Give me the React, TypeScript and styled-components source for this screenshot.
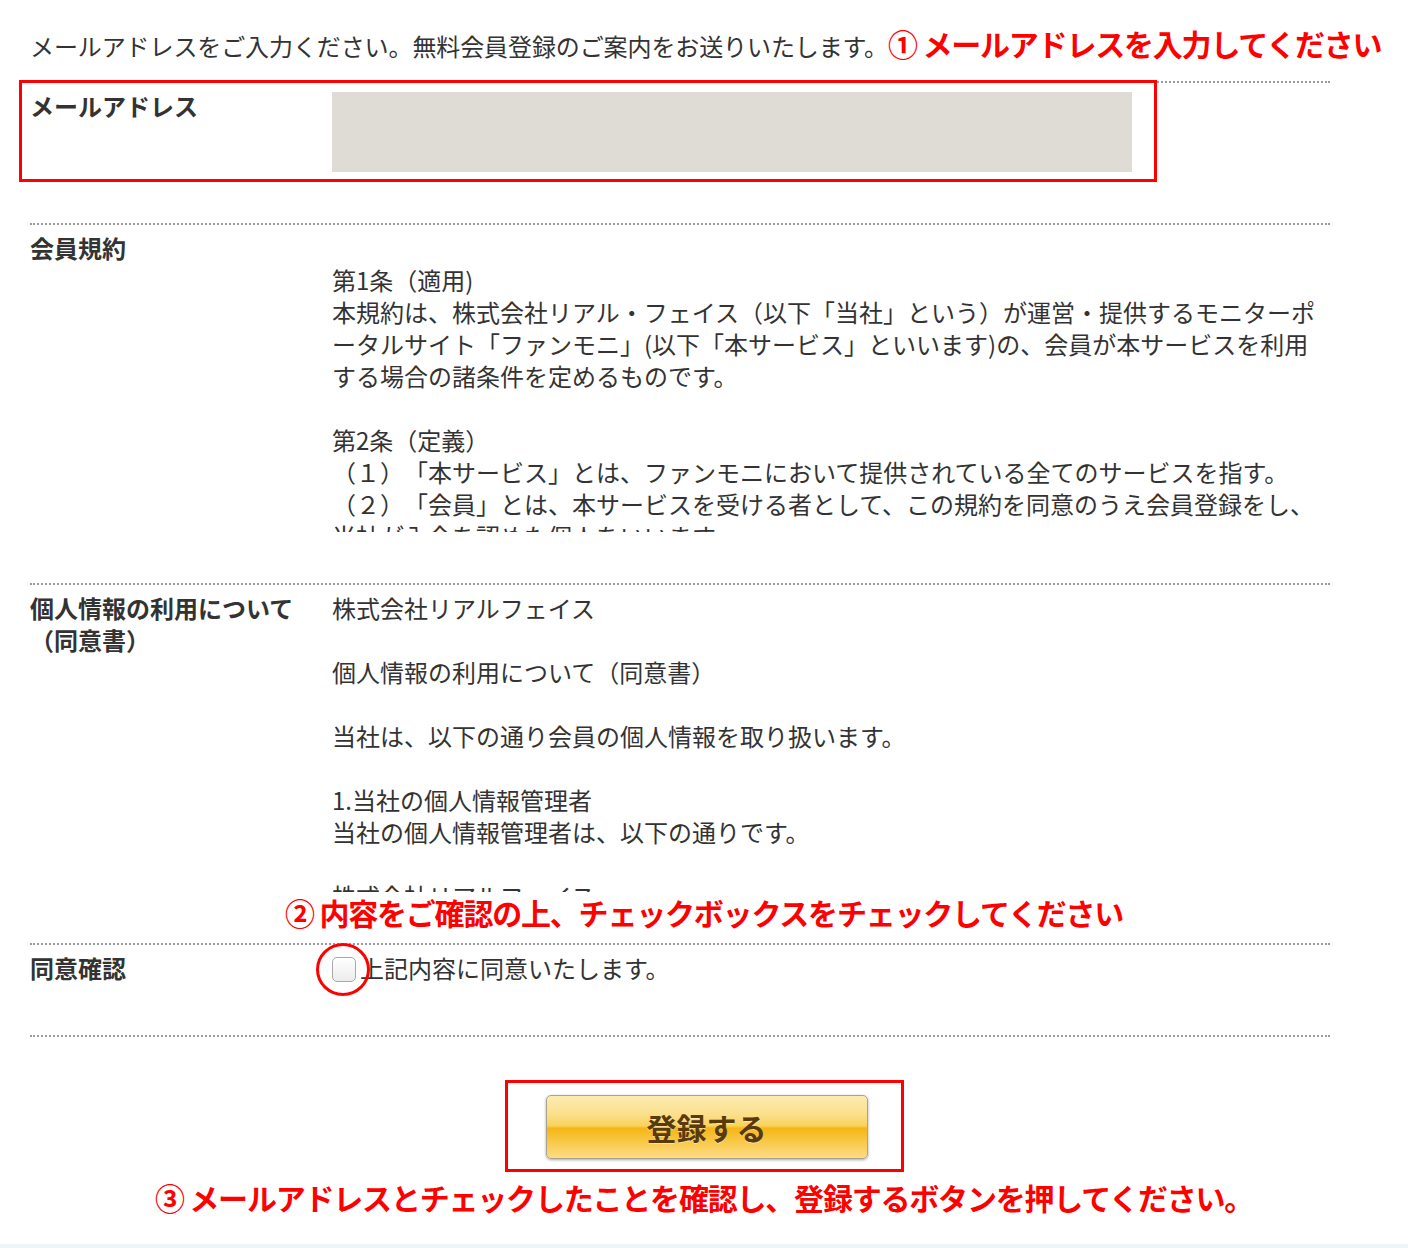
import React from 'react';
import styled, { createGlobalStyle } from 'styled-components';

const GlobalStyle = createGlobalStyle`
  html, body { margin: 0; padding: 0; background: #fff; }
  body {
    font-family: "Noto Sans CJK JP", "Noto Sans", sans-serif;
    color: #333;
    text-spacing-trim: space-all;
  }
`;

const Page = styled.div`
  width: 1408px;
  display: flex;
  flex-direction: column;
`;

const Form = styled.div`
  margin-left: 30px;
  width: 1300px;
`;

const Intro = styled.p`
  margin: 0 0 22px;
  padding-top: 27px;
  height: 32px;
  font-size: 24px;
  line-height: 32px;
  white-space: nowrap;
  letter-spacing: -0.1px;
`;

const Note = styled.span`
  color: #ff0000;
  font-weight: 700;
  font-size: 30px;
  line-height: 32px;
  letter-spacing: -1.2px;
  white-space: nowrap;
`;

const Row = styled.div<{ $last?: boolean }>`
  position: relative;
  display: grid;
  grid-template-columns: 302px 998px;
  align-items: start;
  border-top: 2px dotted #9a9a9a;
  padding: 7px 0 51px;
  ${(p) => (p.$last ? 'border-bottom: 2px dotted #9a9a9a;' : '')}
`;

const Label = styled.div`
  font-size: 24px;
  line-height: 32px;
  font-weight: 700;
  color: #333;
`;

const EmailInput = styled.input`
  display: block;
  width: 800px;
  height: 80px;
  margin: 2px 0 0;
  padding: 0;
  border: none;
  background: #dfdcd5;
  outline: none;
`;

const TermsBox = styled.div<{ $offset?: boolean }>`
  box-sizing: border-box;
  height: 300px;
  padding-top: ${(p) => (p.$offset ? '32px' : '0')};
  overflow: hidden;
  font-size: 24px;
  line-height: 32px;
  white-space: pre-line;
  color: #333;
`;

const RedFrame = styled.div`
  position: absolute;
  left: -11px;
  top: -3px;
  width: 1138px;
  height: 102px;
  box-sizing: border-box;
  border: 3px solid #ff0000;
  pointer-events: none;
`;

const FloatingNote = styled(Note)`
  position: absolute;
  left: 255px;
  bottom: 11px;
  line-height: 40px;
`;

const AgreeLine = styled.label`
  display: flex;
  align-items: center;
  gap: 4px;
  height: 32px;
  font-size: 24px;
  line-height: 32px;
  color: #333;
`;

const CheckWrap = styled.span`
  position: relative;
  display: inline-flex;
  margin-top: 2px;
`;

const Check = styled.input`
  appearance: none;
  -webkit-appearance: none;
  width: 24px;
  height: 25px;
  margin: 0;
  box-sizing: border-box;
  border: 1px solid #a8a8a8;
  border-radius: 5px;
  background: linear-gradient(#ffffff, #ececec);
  box-shadow: inset 0 1px 1px rgba(255, 255, 255, 0.9);
`;

const RedCircle = styled.span`
  position: absolute;
  left: -16px;
  top: -14px;
  width: 54px;
  height: 53px;
  box-sizing: border-box;
  border: 3px solid #ff0000;
  border-radius: 50%;
  pointer-events: none;
`;

const Submit = styled.div`
  display: flex;
  flex-direction: column;
  align-items: center;
  margin-top: 43px;
`;

const ButtonFrame = styled.div`
  border: 3px solid #ff0000;
  padding: 12px 33px 10px 38px;
`;

const Button = styled.button`
  display: block;
  width: 322px;
  height: 64px;
  border: 1px solid #a9a28f;
  border-radius: 5px;
  background: linear-gradient(
    to bottom,
    #fdebb3 0%,
    #fbdf8a 30%,
    #f9d25c 48%,
    #f5b616 52%,
    #f8c94a 75%,
    #fcdc86 100%
  );
  box-shadow: 0 1px 3px rgba(0, 0, 0, 0.35);
  font-family: "Noto Sans CJK JP", sans-serif;
  font-size: 30px;
  font-weight: 700;
  color: #5a3a0c;
  text-shadow: 0 1px 0 rgba(255, 255, 255, 0.45);
  cursor: pointer;
`;

const BottomNote = styled(Note)`
  display: block;
  margin-top: 5px;
  line-height: 40px;
  text-align: center;
`;

const Footer = styled.div`
  margin-top: 27px;
  height: 40px;
  background: #eef5f8;
`;

const terms1 = `第1条（適用)
本規約は、株式会社リアル・フェイス（以下「当社」という）が運営・提供するモニターポ
ータルサイト「ファンモニ」(以下「本サービス」といいます)の、会員が本サービスを利用
する場合の諸条件を定めるものです。

第2条（定義）
（１）「本サービス」とは、ファンモニにおいて提供されている全てのサービスを指す。
（２）「会員」とは、本サービスを受ける者として、この規約を同意のうえ会員登録をし、
当社が入会を認めた個人をいいます。
（３）「登録情報」とは、会員が本サービスを利用するにあたり当社に届け出た情報をいいます。`;

const terms2 = `株式会社リアルフェイス

個人情報の利用について（同意書）

当社は、以下の通り会員の個人情報を取り扱います。

1.当社の個人情報管理者
当社の個人情報管理者は、以下の通りです。

株式会社リアルフェイス
個人情報保護管理者`;

export default function App() {
  return (
    <Page>
      <GlobalStyle />
      <Form>
        <Intro>
          メールアドレスをご入力ください。無料会員登録のご案内をお送りいたします。
          <Note>① メールアドレスを入力してください</Note>
        </Intro>

        <Row>
          <Label>メールアドレス</Label>
          <div>
            <EmailInput type="email" aria-label="メールアドレス" />
          </div>
          <RedFrame />
        </Row>

        <Row>
          <Label>会員規約</Label>
          <TermsBox $offset>{terms1}</TermsBox>
        </Row>

        <Row>
          <Label>
            個人情報の利用について
            <br />
            （同意書）
          </Label>
          <TermsBox>{terms2}</TermsBox>
          <FloatingNote>② 内容をご確認の上、チェックボックスをチェックしてください</FloatingNote>
        </Row>

        <Row $last>
          <Label>同意確認</Label>
          <AgreeLine>
            <CheckWrap>
              <Check type="checkbox" />
              <RedCircle />
            </CheckWrap>
            上記内容に同意いたします。
          </AgreeLine>
        </Row>
      </Form>

      <Submit>
        <ButtonFrame>
          <Button type="button">登録する</Button>
        </ButtonFrame>
        <BottomNote>③ メールアドレスとチェックしたことを確認し、登録するボタンを押してください。</BottomNote>
      </Submit>
      <Footer />
    </Page>
  );
}
